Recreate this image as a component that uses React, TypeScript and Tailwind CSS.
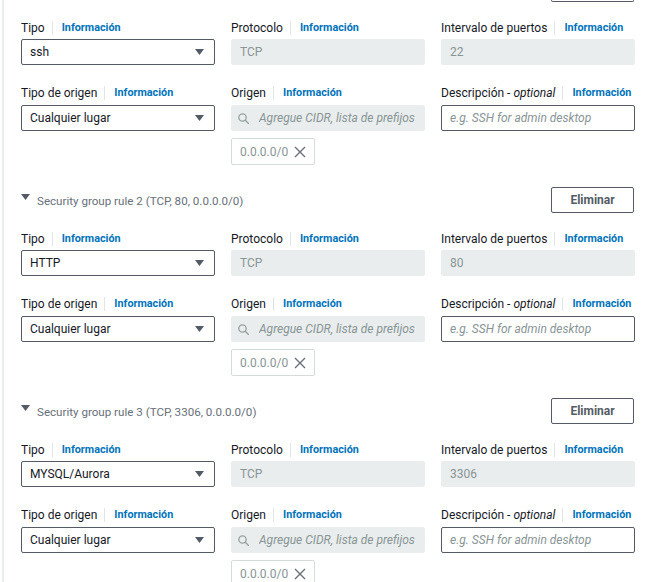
import * as React from "react"

interface Rule {
  id: number
  type: string
  port: string
}

const rules: Rule[] = [
  { id: 1, type: "ssh", port: "22" },
  { id: 2, type: "HTTP", port: "80" },
  { id: 3, type: "MYSQL/Aurora", port: "3306" },
]

const Caret = () => (
  <svg width="9" height="6" viewBox="0 0 9 6" className="shrink-0">
    <path d="M0 0h9L4.5 6z" fill="#545b64" />
  </svg>
)

const SearchIcon = () => (
  <svg width="11" height="11" viewBox="0 0 11 11" className="shrink-0" fill="none">
    <circle cx="4.5" cy="4.5" r="3.7" stroke="#95a1a3" strokeWidth="1.3" />
    <path d="M7.3 7.3 10.5 10.5" stroke="#95a1a3" strokeWidth="1.4" strokeLinecap="round" />
  </svg>
)

const Cross = () => (
  <svg width="12" height="12" viewBox="0 0 12 12" className="shrink-0" fill="none">
    <path d="M1 1l10 10M11 1 1 11" stroke="#687078" strokeWidth="1.4" />
  </svg>
)

const Info = () => (
  <>
    <span className="ml-[7px] mr-[9px] h-[14px] w-px bg-[#e1e5e6]" />
    <span className="text-[10.8px] font-bold leading-4 text-[#0073bb]">Información</span>
  </>
)

const Label: React.FC<{ children: React.ReactNode; gap?: string }> = ({ children, gap = "mb-[3px]" }) => (
  <div className={`flex items-center h-4 whitespace-nowrap ${gap}`}>
    <span className="text-[12px] leading-4 text-[#16191f]">{children}</span>
    <Info />
  </div>
)

const Select: React.FC<{ value: string }> = ({ value }) => (
  <div className="flex items-center justify-between h-[26px] px-2 pr-[10px] border border-[#545b64] rounded-[2px] bg-white">
    <span className="text-[12px] text-[#16191f]">{value}</span>
    <Caret />
  </div>
)

const Disabled: React.FC<{ value: string }> = ({ value }) => (
  <div className="flex items-center h-[26px] px-[9px] rounded-[2px] bg-[#eaeded]">
    <span className="text-[12px] text-[#879596]">{value}</span>
  </div>
)

const RuleBlock: React.FC<{ rule: Rule }> = ({ rule }) => (
  <div className="w-[614px] mb-[22px]">
    {/* header - first rule is scrolled up, only the button's bottom edge shows */}
    {rule.id === 1 ? (
      <div className="flex justify-end h-[2px]">
        <div className="w-[83px] mr-[1px] h-[2px] border border-t-0 border-[#545b64] rounded-b-[2px]" />
      </div>
    ) : (
      <div className="flex items-center justify-between h-[26px]">
        <div className="flex items-start">
          <span className="mt-[2px] mr-[7px]">
            <svg width="9" height="6" viewBox="0 0 9 6">
              <path d="M0 0h9L4.5 6z" fill="#545b64" />
            </svg>
          </span>
          <span className="mt-[1px] text-[11.6px] leading-4 text-[#687078]">
            Security group rule {rule.id} (TCP, {rule.port}, 0.0.0.0/0)
          </span>
        </div>
        <button className="h-[26px] w-[83px] mr-[1px] border border-[#545b64] rounded-[2px] bg-white text-[12px] font-bold text-[#545b64]">
          Eliminar
        </button>
      </div>
    )}

    <div className="grid grid-cols-[194px_194px_194px] gap-x-4 mt-[18px]">
      <div>
        <Label>Tipo</Label>
        <Select value={rule.type} />
      </div>
      <div>
        <Label>Protocolo</Label>
        <Disabled value="TCP" />
      </div>
      <div>
        <Label>Intervalo de puertos</Label>
        <Disabled value={rule.port} />
      </div>
    </div>

    <div className="grid grid-cols-[194px_194px_194px] gap-x-4 mt-[20px]">
      <div>
        <Label gap="mb-[4px]">Tipo de origen</Label>
        <Select value="Cualquier lugar" />
      </div>
      <div>
        <Label gap="mb-[4px]">Origen</Label>
        <div className="flex items-center gap-[10px] h-[26px] pl-[7px] pr-[10px] rounded-[2px] bg-[#eaeded] whitespace-nowrap">
          <SearchIcon />
          <span className="flex-1 overflow-hidden text-[12px] italic text-[#879596]">
            Agregue CIDR, lista de prefijos o grupos
          </span>
        </div>
        <div className="mt-[7px] flex items-center justify-between w-[84px] h-[27px] pl-2 pr-[8px] border border-[#d5dbdb] rounded-[2px]">
          <span className="text-[12px] text-[#879596]">0.0.0.0/0</span>
          <Cross />
        </div>
      </div>
      <div>
        <div className="flex items-center h-4 mb-[4px] whitespace-nowrap">
          <span className="text-[12px] leading-4 text-[#16191f]">
            Descripción - <i>optional</i>
          </span>
          <Info />
        </div>
        <div className="flex items-center h-[26px] px-2 border border-[#545b64] rounded-[2px] bg-white">
          <span className="text-[12px] italic text-[#879596]">e.g. SSH for admin desktop</span>
        </div>
      </div>
    </div>
  </div>
)

export default function App() {
  return (
    <div
      className="w-[652px] h-[582px] overflow-hidden bg-white"
      style={{ fontFamily: "Roboto, 'Liberation Sans', Arial, sans-serif" }}
    >
      <div className="flex flex-col ml-[2px] h-full border-l-2 border-[#eaeded] pl-[17px]">
        {rules.map((r) => (
          <RuleBlock key={r.id} rule={r} />
        ))}
      </div>
    </div>
  )
}
